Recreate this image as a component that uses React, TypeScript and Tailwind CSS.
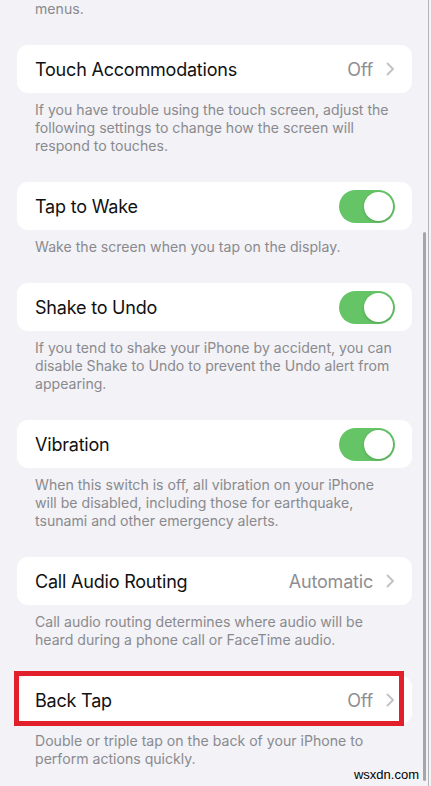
const font = { fontFamily: "Inter, 'Noto Sans', sans-serif" };

function Chevron() {
  return (
    <svg width="9" height="14" viewBox="0 0 9 14" fill="none" className="shrink-0">
      <path d="M1.5 1.5 L7 7 L1.5 12.5" stroke="#c4c4c8" strokeWidth="2" strokeLinecap="round" strokeLinejoin="round" />
    </svg>
  );
}

function Toggle() {
  return (
    <div className="relative h-[33px] w-[56px] shrink-0 rounded-full bg-[#65c466]">
      <div className="absolute right-[2px] top-[2px] h-[29px] w-[29px] rounded-full bg-white shadow-[0_1px_3px_rgba(0,0,0,0.18)]" />
    </div>
  );
}

function Card({ title, value, toggle }: { title: string; value?: string; toggle?: boolean }) {
  return (
    <div className="flex h-12 items-center justify-between rounded-[11px] bg-white pl-[18px] pr-[17px]">
      <span className="text-[18px] tracking-[-0.2px] text-[#111]">{title}</span>
      {toggle ? (
        <Toggle />
      ) : (
        <div className="flex items-center gap-[13px]">
          <span className="text-[18px] tracking-[-0.2px] text-[#8e8e93]">{value}</span>
          <Chevron />
        </div>
      )}
    </div>
  );
}

// footer text under a group; lines are given so they wrap as on the device
function Note({ lines, first }: { lines: string[]; first?: boolean }) {
  return (
    <div
      className={`${first ? "pt-0" : "pt-2"} pb-[27px] pl-[18px] pr-[18px] text-[14.1px] leading-[18px] text-[#8a8a8e]`}
    >
      {lines.map((l) => (
        <span key={l} className="block whitespace-nowrap">
          {l}
        </span>
      ))}
    </div>
  );
}

export default function App() {
  return (
    <div className="relative h-[786px] w-[431px] overflow-hidden bg-[#f2f2f7]" style={font}>
      <div className="pl-[17px] pr-[19px]">
        <Note first lines={["menus."]} />

        <Card title="Touch Accommodations" value="Off" />
        <Note
          lines={[
            "If you have trouble using the touch screen, adjust the",
            "following settings to change how the screen will",
            "respond to touches.",
          ]}
        />

        <Card title="Tap to Wake" toggle />
        <Note lines={["Wake the screen when you tap on the display."]} />

        <Card title="Shake to Undo" toggle />
        <Note
          lines={[
            "If you tend to shake your iPhone by accident, you can",
            "disable Shake to Undo to prevent the Undo alert from",
            "appearing.",
          ]}
        />

        <Card title="Vibration" toggle />
        <Note
          lines={[
            "When this switch is off, all vibration on your iPhone",
            "will be disabled, including those for earthquake,",
            "tsunami and other emergency alerts.",
          ]}
        />

        <Card title="Call Audio Routing" value="Automatic" />
        <Note
          lines={[
            "Call audio routing determines where audio will be",
            "heard during a phone call or FaceTime audio.",
          ]}
        />

        <div className="relative">
          <Card title="Back Tap" value="Off" />
          <div className="absolute -left-[3px] -top-[5px] h-[55px] w-[390px] border-[5px] border-[#e2202b]" />
        </div>
        <Note
          lines={[
            "Double or triple tap on the back of your iPhone to",
            "perform actions quickly.",
          ]}
        />
      </div>

      {/* scroll indicator + window edge */}
      <div className="absolute right-[5px] top-[232px] h-[549px] w-[3px] rounded-full bg-[#a6a6aa]" />
      <div className="absolute right-[2px] top-0 h-full w-px bg-[#b4b4b8]" />
      <div className="absolute right-0 top-0 h-full w-[2px] bg-[#f4f4f4]" />

      <span
        className="absolute bottom-[2px] right-[12px] text-[13px] text-black"
        style={{ fontFamily: "'Liberation Sans', Arial, sans-serif" }}
      >
        wsxdn.com
      </span>
    </div>
  );
}
